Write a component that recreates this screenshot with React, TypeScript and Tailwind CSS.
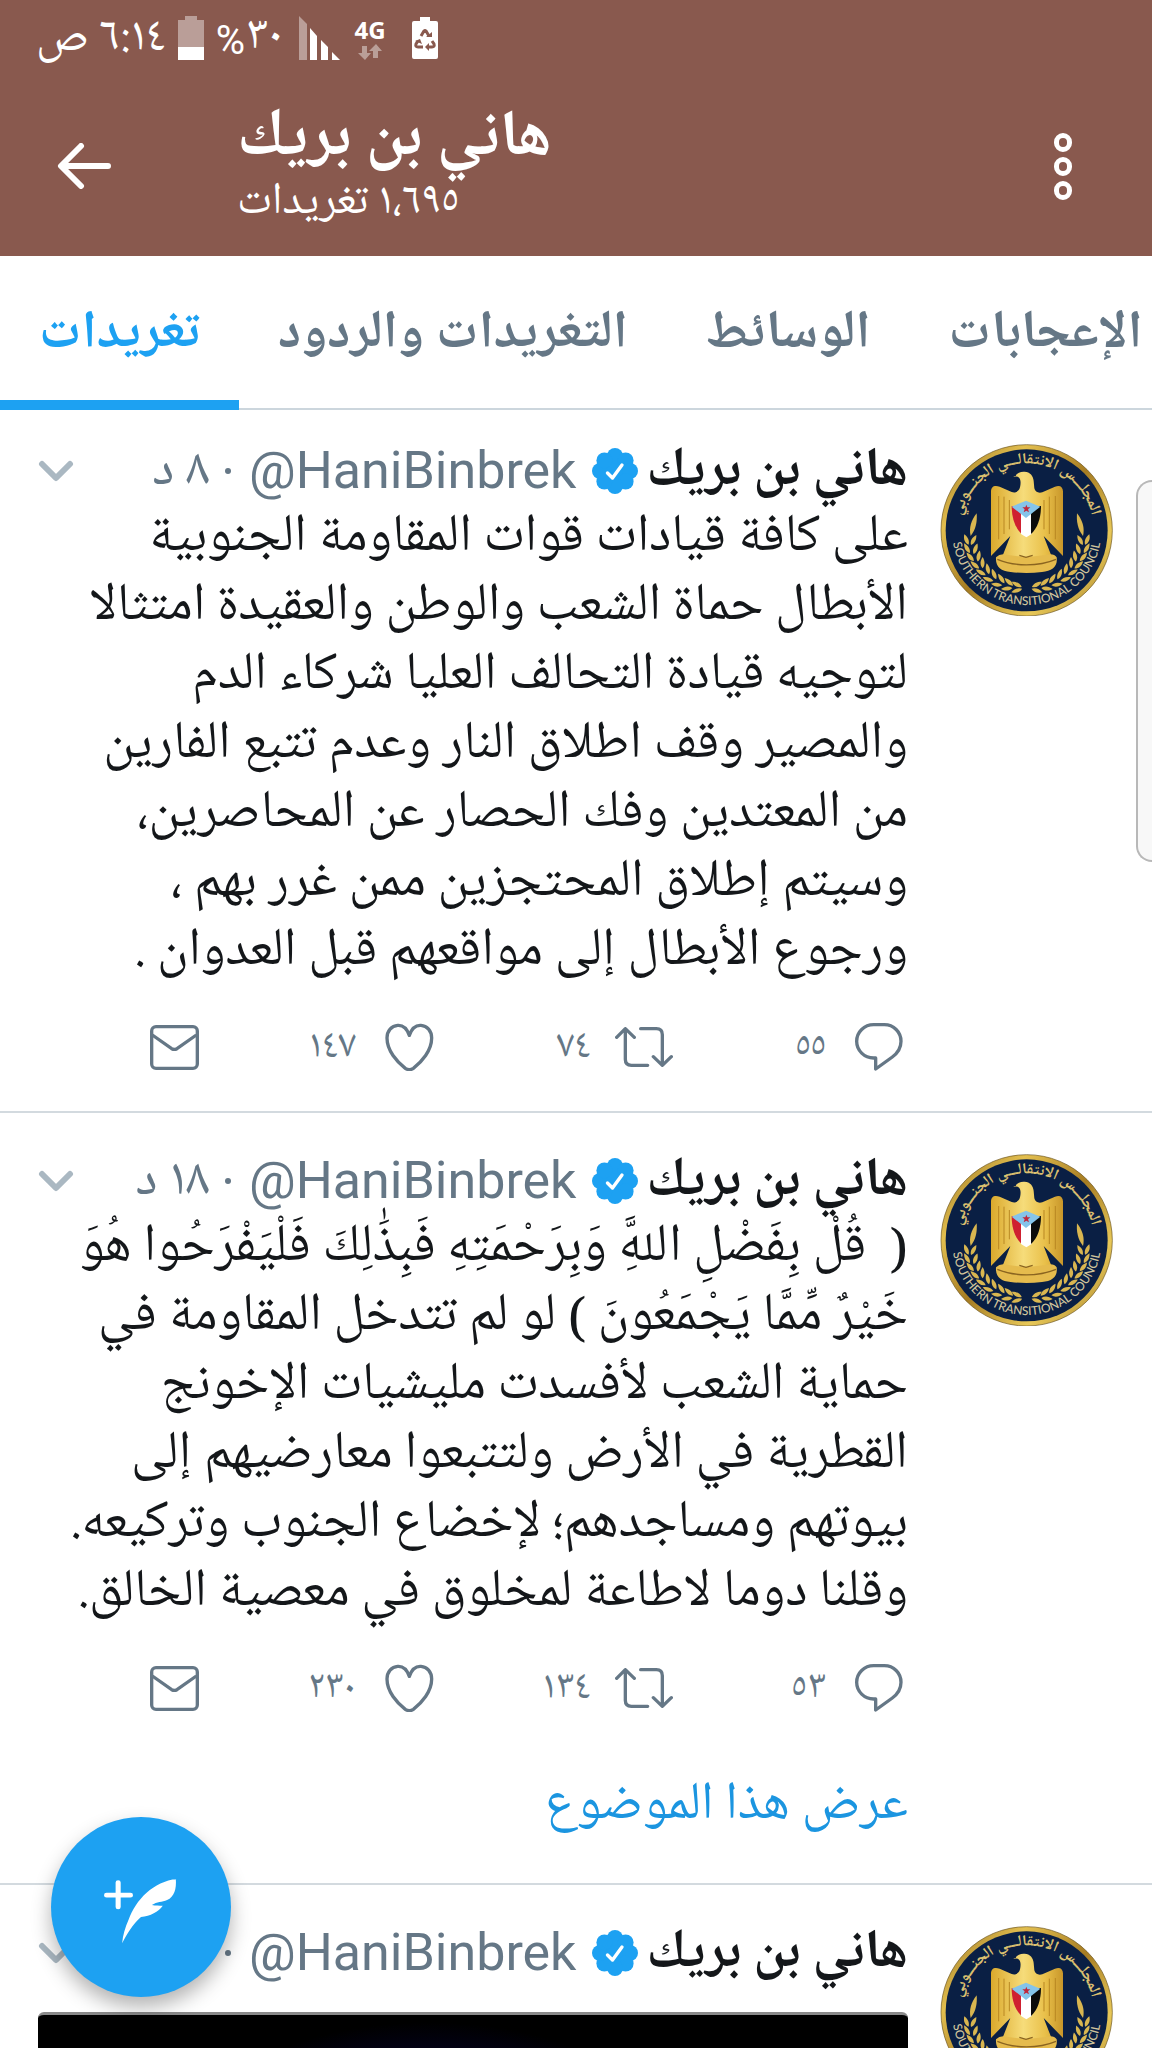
import { useId, useState } from "react";

interface Tweet {
  id: number;
  age: string;
  lines: string[];
  replies?: string;
  retweets?: string;
  likes?: string;
  thread?: boolean;
  media?: boolean;
}

const TABS = ["تغريدات", "التغريدات والردود", "الوسائط", "الإعجابات"];

const TWEETS: Tweet[] = [
  {
    id: 1,
    age: "٨ د",
    lines: [
      "على كافة قيادات قوات المقاومة الجنوبية",
      "الأبطال حماة الشعب والوطن والعقيدة امتثالا",
      "لتوجيه قيادة التحالف العليا شركاء الدم",
      "والمصير وقف اطلاق النار وعدم تتبع الفارين",
      "من المعتدين وفك الحصار عن المحاصرين،",
      "وسيتم إطلاق المحتجزين ممن غرر بهم ،",
      "ورجوع الأبطال إلى مواقعهم قبل العدوان .",
    ],
    replies: "٥٥",
    retweets: "٧٤",
    likes: "١٤٧",
  },
  {
    id: 2,
    age: "١٨ د",
    lines: [
      "( \u00a0قُلْ بِفَضْلِ اللهَِّ وَبِرَحْمَتِهِ فَبِذَٰلِكَ فَلْيَفْرَحُوا هُوَ",
      "خَيْرٌ مِّمَّا يَجْمَعُونَ ) لو لم تتدخل المقاومة في",
      "حماية الشعب لأفسدت مليشيات الإخونج",
      "القطرية في الأرض ولتتبعوا معارضيهم إلى",
      "بيوتهم ومساجدهم؛ لإخضاع الجنوب وتركيعه.",
      "وقلنا دوما لاطاعة لمخلوق في معصية الخالق.",
    ],
    replies: "٥٣",
    retweets: "١٣٤",
    likes: "٢٣٠",
    thread: true,
  },
  { id: 3, age: "١ س", lines: [], media: true },
];

// one side of the wreath: x, y, rotation of each leaf
const LEAVES = [
  [80, 300, -22], [100, 302, 28],
  [82, 326, -30], [106, 328, 20],
  [92, 352, -40], [116, 350, 10],
  [106, 376, -50], [128, 370, 0],
  [124, 398, -60], [144, 388, -12],
  [146, 418, -70], [163, 404, -22],
  [172, 434, -82], [185, 417, -34],
  [202, 445, -95], [208, 427, -48],
  [232, 451, -108], [232, 434, -62],
];

function Avatar() {
  const id = useId();
  const wreath = (
    <g fill="#d9b650">
      <path d="M92 288c-6-24 2-48 18-68 2 24-2 48-18 68Z" />
      {LEAVES.map(([x, y, r], i) => (
        <path
          key={i}
          d="M0 15C-9 5-8-7 0-19C7-7 8 5 0 15Z"
          transform={`translate(${x} ${y}) rotate(${r})`}
        />
      ))}
    </g>
  );
  return (
    <svg viewBox="0 0 528 528" className="h-44 w-44" role="img" aria-label="هاني بن بريك">
      <defs>
        <linearGradient id={`${id}g`} x1="0" x2="1" y1="0" y2="1">
          <stop offset="0" stopColor="#8f6a1d" />
          <stop offset=".25" stopColor="#e3bf4f" />
          <stop offset=".5" stopColor="#a67c22" />
          <stop offset=".75" stopColor="#e8c858" />
          <stop offset="1" stopColor="#a07a25" />
        </linearGradient>
        <linearGradient id={`${id}e`} x1="0" x2="1">
          <stop offset="0" stopColor="#dba92c" />
          <stop offset=".45" stopColor="#f6dc7a" />
          <stop offset=".75" stopColor="#e9c04a" />
          <stop offset="1" stopColor="#c8962a" />
        </linearGradient>
        <path id={`${id}t`} d="M66 271A194 194 0 0 1 454 271" />
        <path id={`${id}b`} d="M36 271A224 224 0 0 0 484 271" />
      </defs>
      <circle cx="260" cy="271" r="257" fill={`url(#${id}g)`} stroke="#6b5420" strokeWidth="2" />
      <circle cx="260" cy="271" r="243" fill="#0a1f44" />
      <text
        fill="#dcc070"
        fontSize="47"
        fontWeight="700"
        direction="rtl"
        textAnchor="middle"
        className="font-['Noto_Naskh_Arabic_UI','Noto_Naskh_Arabic','DejaVu_Sans_Condensed',sans-serif]"
      >
        <textPath href={`#${id}t`} startOffset="50%">
          المجلـــس الانتقالـــي الجنـــوبي
        </textPath>
      </text>
      <text fill="#d0c49c" fontSize="36" textAnchor="middle" className="font-['Lato',sans-serif] font-medium">
        <textPath href={`#${id}b`} startOffset="50%">
          SOUTHERN TRANSITIONAL COUNCIL
        </textPath>
      </text>
      {wreath}
      <g transform="translate(521 0) scale(-1 1)">{wreath}</g>
      <path
        d="M226 110c4-11 14-16 28-15 16 1 26 12 27 28l2 22c2 10 12 16 24 12l38-17c14-6 24 0 24 14v194l-58-60 32 82h-164l32-82-58 60V154c0-14 10-20 26-14l36 16c12 4 22-2 25-14 3-14 2-22-2-28-6-6-14-6-18-4Z"
        fill={`url(#${id}e)`}
      />
      <path
        d="M176 168v130M192 170v112M208 180v88M312 180v88M328 170v112M346 168v130"
        stroke="#b98722"
        strokeWidth="3"
      />
      <path d="M168 352q12-12 30-8l62 8 62-8q20-4 28 8c4 28-14 42-44 44-30 4-64 4-94 0-30-2-46-16-44-44Z" fill="#e5bb4d" />
      <path d="M172 358c50 22 124 22 176 0M238 346l20 6 20-6" fill="none" stroke="#8a6420" strokeWidth="4" />
      <path d="M215 198h30v84c-20-18-30-48-30-84Z" fill="#cf2030" />
      <path d="M243 198h32v84l-16 10-16-10Z" fill="#fff" />
      <path d="M273 198h30c0 36-10 66-30 84Z" fill="#0b0b0b" />
      <path d="M215 200l43-18 43 18-43 34Z" fill="#85c4ea" />
      <path d="M259 194l3 8h9l-7 6 3 9-8-5-8 5 3-9-7-6h9Z" fill="#c0283c" />
    </svg>
  );
}

function VerifiedBadge() {
  return (
    <svg viewBox="0 0 46 46" className="h-[46px] w-[46px] shrink-0" role="img" aria-label="حساب موثّق">
      <g fill="#1da1f2">
        <circle cx="23" cy="23" r="17" />
        <circle cx="23" cy="8" r="8" />
        <circle cx="33.6" cy="12.4" r="8" />
        <circle cx="38" cy="23" r="8" />
        <circle cx="33.6" cy="33.6" r="8" />
        <circle cx="23" cy="38" r="8" />
        <circle cx="12.4" cy="33.6" r="8" />
        <circle cx="8" cy="23" r="8" />
        <circle cx="12.4" cy="12.4" r="8" />
      </g>
      <path d="M15.5 25l5 5L30 17" fill="none" stroke="#fff" strokeWidth="3.4" strokeLinecap="round" strokeLinejoin="round" />
    </svg>
  );
}

function ReplyIcon() {
  return (
    <svg viewBox="0 0 144 144" className="h-12 w-12">
      <path
        d="M56 5h32c28 0 50 22 50 50 0 20-8 34-26 47l-50 36v-33h-6C28 105 5 83 5 55S28 5 56 5Z"
        fill="none" stroke="currentColor" strokeWidth="10" strokeLinejoin="round"
      />
    </svg>
  );
}

function RetweetIcon() {
  return (
    <svg viewBox="0 0 174 126" className="h-[42px] w-[58px]">
      <path
        d="M5 34L31 8l27 26M31 8v92c0 12 6 18 18 18h49M77 8h47c12 0 18 6 18 18v92M115 92l27 26 27-26"
        fill="none" stroke="currentColor" strokeWidth="10" strokeLinecap="round" strokeLinejoin="round"
      />
    </svg>
  );
}

function HeartIcon() {
  return (
    <svg viewBox="0 0 147 144" className="h-12 w-[49px]">
      <path
        d="M73 37C65 14 51 6 38 7 20 8 6 23 6 45c0 38 30 72 55 91q12 8 24 0c25-19 55-53 55-91 0-22-14-37-32-38-13-1-27 7-35 30Z"
        fill="none" stroke="currentColor" strokeWidth="10" strokeLinejoin="round"
      />
    </svg>
  );
}

function MailIcon() {
  return (
    <svg viewBox="0 0 147 135" className="h-[45px] w-[49px]">
      <g fill="none" stroke="currentColor" strokeWidth="10">
        <rect x="5" y="5" width="137" height="125" rx="13" />
        <path d="M7 30l58 41q8 4 16 0l58-41" />
      </g>
    </svg>
  );
}

function Action({ label, count, children }: { label: string; count?: string; children: React.ReactNode }) {
  return (
    <button aria-label={label} className="flex h-12 items-center gap-6">
      <span className="flex w-[58px] justify-center">{children}</span>
      {count && <span className="text-[40px] leading-[48px]">{count}</span>}
    </button>
  );
}

function TweetRow({ tweet }: { tweet: Tweet }) {
  return (
    <article dir="rtl" className="flex gap-8 border-b-2 border-[#d3dadf] pt-[37px] pr-9 pl-[38px] first:pt-[30px]">
      <div className="shrink-0">
        <Avatar />
      </div>
      <div className="min-w-0 flex-1">
        <div className="flex h-[62px] items-center text-[#657786]">
          <span className="text-[54px] leading-[62px] font-bold whitespace-nowrap text-[#14171a]">هاني بن بريك</span>
          <span className="mr-2 ml-4">
            <VerifiedBadge />
          </span>
          <a href="#profile" dir="ltr" className="font-['Roboto',sans-serif] text-[52px] leading-[62px]">
            @HaniBinbrek
          </a>
          <span className="mr-[18px] ml-4 h-[6px] w-[6px] rounded-full bg-[#657786]" />
          <time className="text-[53px] leading-[62px] whitespace-nowrap">{tweet.age}</time>
          <button aria-label="المزيد" className="mr-auto text-[#aab8c2]">
            <svg viewBox="0 0 36 24" className="h-6 w-9">
              <path d="M4 5l14 14L32 5" fill="none" stroke="currentColor" strokeWidth="6" strokeLinecap="round" strokeLinejoin="round" />
            </svg>
          </button>
        </div>

        {tweet.lines.length > 0 && (
          <p className="text-[53px] leading-[69px] text-[#14171a]">
            {tweet.lines.map((line) => (
              <span key={line} className="block whitespace-nowrap">{line}</span>
            ))}
          </p>
        )}

        {tweet.replies && (
          <div className="mt-[38px] mb-10 flex text-[#657786]">
            <div className="flex-1">
              <Action label="رد" count={tweet.replies}><ReplyIcon /></Action>
            </div>
            <div className="flex-1">
              <Action label="إعادة تغريد" count={tweet.retweets}><RetweetIcon /></Action>
            </div>
            <div className="flex-1">
              <Action label="إعجاب" count={tweet.likes}><HeartIcon /></Action>
            </div>
            <div className="w-[165px]">
              <Action label="رسالة"><MailIcon /></Action>
            </div>
          </div>
        )}

        {tweet.thread && (
          <a href="#thread" className="mb-11 block pt-[18px] text-[53px] leading-[69px] text-[#1b95e0]">عرض هذا الموضوع</a>
        )}

        {tweet.media && (
          <div className="mt-7 h-96 rounded-md border-t-3 border-[#8a8a8a] bg-[radial-gradient(ellipse_at_45%_35%,#0a0660_0%,#000_36%)]" />
        )}
      </div>
    </article>
  );
}

function StatusBar() {
  return (
    <div className="flex h-[76px] items-center gap-3 pl-9 text-[48px] leading-[56px]">
      <span dir="rtl">٦:١٤ ص</span>
      <svg viewBox="0 0 26 44" className="h-11 w-[26px]" fill="#fff">
        <path d="M7 0h12v4h7v28H0V4h7Z" opacity=".42" />
        <path d="M0 31h26v13H0Z" />
      </svg>
      <span dir="rtl">
        ٣٠<span className="font-['Roboto',sans-serif] text-[40px]">%</span>
      </span>
      <svg viewBox="0 0 41 44" className="ml-1 h-11 w-[41px]" fill="#fff">
        <path d="M0 0l8 8v36H0Z" opacity=".42" />
        <path d="M11 12l7 8v24h-7ZM22 24l7 7v13h-7ZM33 36l8 8h-8Z" />
      </svg>
      <span className="flex w-9 flex-col items-center">
        <span className="font-['Open_Sans',sans-serif] text-[24px] leading-7 font-bold">4G</span>
        <svg viewBox="0 0 24 16" className="h-4 w-6" fill="#fff" opacity=".42">
          <path d="M4 2h5v7h4l-6 7-7-7h4ZM15 14h5V7h4l-6-7-7 7h4Z" />
        </svg>
      </span>
      <svg viewBox="0 0 26 42" className="ml-3 h-[42px] w-[26px]">
        <path d="M8 0h10v4h6q2 0 2 2v34q0 2-2 2H2q-2 0-2-2V6q0-2 2-2h6Z" fill="#fff" />
        <path
          d="M9 19l3-5q1-1 2 0l3 5M20 24l2 3q1 3-2 3h-5M11 30H6q-3 0-2-3l2-3"
          fill="none" stroke="#89594e" strokeWidth="3"
        />
        <path d="M14 20h6v-5ZM17 26v8l-4-4ZM3 24l5-2 2 5Z" fill="#89594e" />
      </svg>
    </div>
  );
}

export default function App() {
  const [active, setActive] = useState(0);

  return (
    <div className="relative flex h-screen flex-col overflow-hidden bg-white font-['Noto_Naskh_Arabic_UI','Noto_Naskh_Arabic','DejaVu_Sans_Condensed',sans-serif]">
      <header className="h-64 shrink-0 bg-[#89594e] text-white">
        <StatusBar />
        <div className="flex items-center pt-[26px] pr-20 pl-14">
          <button aria-label="رجوع">
            <svg viewBox="0 0 56 46" className="h-[46px] w-14">
              <path d="M52 23H6M25 3L5 23l20 20" fill="none" stroke="currentColor" strokeWidth="6" strokeLinecap="round" strokeLinejoin="round" />
            </svg>
          </button>
          <div className="ml-[125px]">
            <h1 className="text-[65px] leading-[72px] font-bold">هاني بن بريك</h1>
            <p dir="rtl" className="text-left text-[45px] leading-[56px]">١،٦٩٥ تغريدات</p>
          </div>
          <button aria-label="خيارات" className="ml-auto flex flex-col gap-[5px]">
            <span className="h-[19px] w-[18px] rounded-full border-5 border-white" />
            <span className="h-[19px] w-[18px] rounded-full border-5 border-white" />
            <span className="h-[19px] w-[18px] rounded-full border-5 border-white" />
          </button>
        </div>
      </header>

      <nav className="flex h-[154px] shrink-0 border-b-2 border-[#ccd6dd]" role="tablist">
        {TABS.map((tab, i) => (
          <button
            key={tab}
            role="tab"
            aria-selected={active === i}
            onClick={() => setActive(i)}
            className={`-mb-[2px] border-b-10 px-[39px] pt-3 text-[53px] leading-[64px] font-bold whitespace-nowrap ${
              active === i ? "border-[#1da1f2] text-[#1da1f2]" : "border-transparent text-[#657786]"
            }`}
          >
            {tab}
          </button>
        ))}
      </nav>

      <main className="min-h-0 flex-1 overflow-hidden">
        {TWEETS.map((tweet) => (
          <TweetRow key={tweet.id} tweet={tweet} />
        ))}
      </main>

      {/* edge panel handle */}
      <div className="absolute top-[480px] right-0 h-[382px] w-4 rounded-l-2xl border-2 border-r-0 border-[#b8b8b8] bg-[#f8f8f8]" />

      <button
        aria-label="تغريدة جديدة"
        className="absolute bottom-[51px] left-[51px] flex h-[180px] w-[180px] items-center justify-center rounded-full bg-[#1da1f2] pt-2 shadow-[0_10px_20px_rgba(0,0,0,0.3)]"
      >
        <svg viewBox="284 264 204 200" className="h-[66px] w-[74px]" preserveAspectRatio="none">
          <path d="M323 278v74M291 316h66" stroke="#fff" strokeWidth="14" strokeLinecap="round" />
          <path
            d="M485 267C420 274 372 330 352 390c-10 24-16 48-18 72 12-26 30-60 52-80 26-2 48-16 60-34-10 0-20 0-30-2 14-10 28-8 42-15 20-10 26-34 24-64Z"
            fill="#fff"
          />
        </svg>
      </button>
    </div>
  );
}
